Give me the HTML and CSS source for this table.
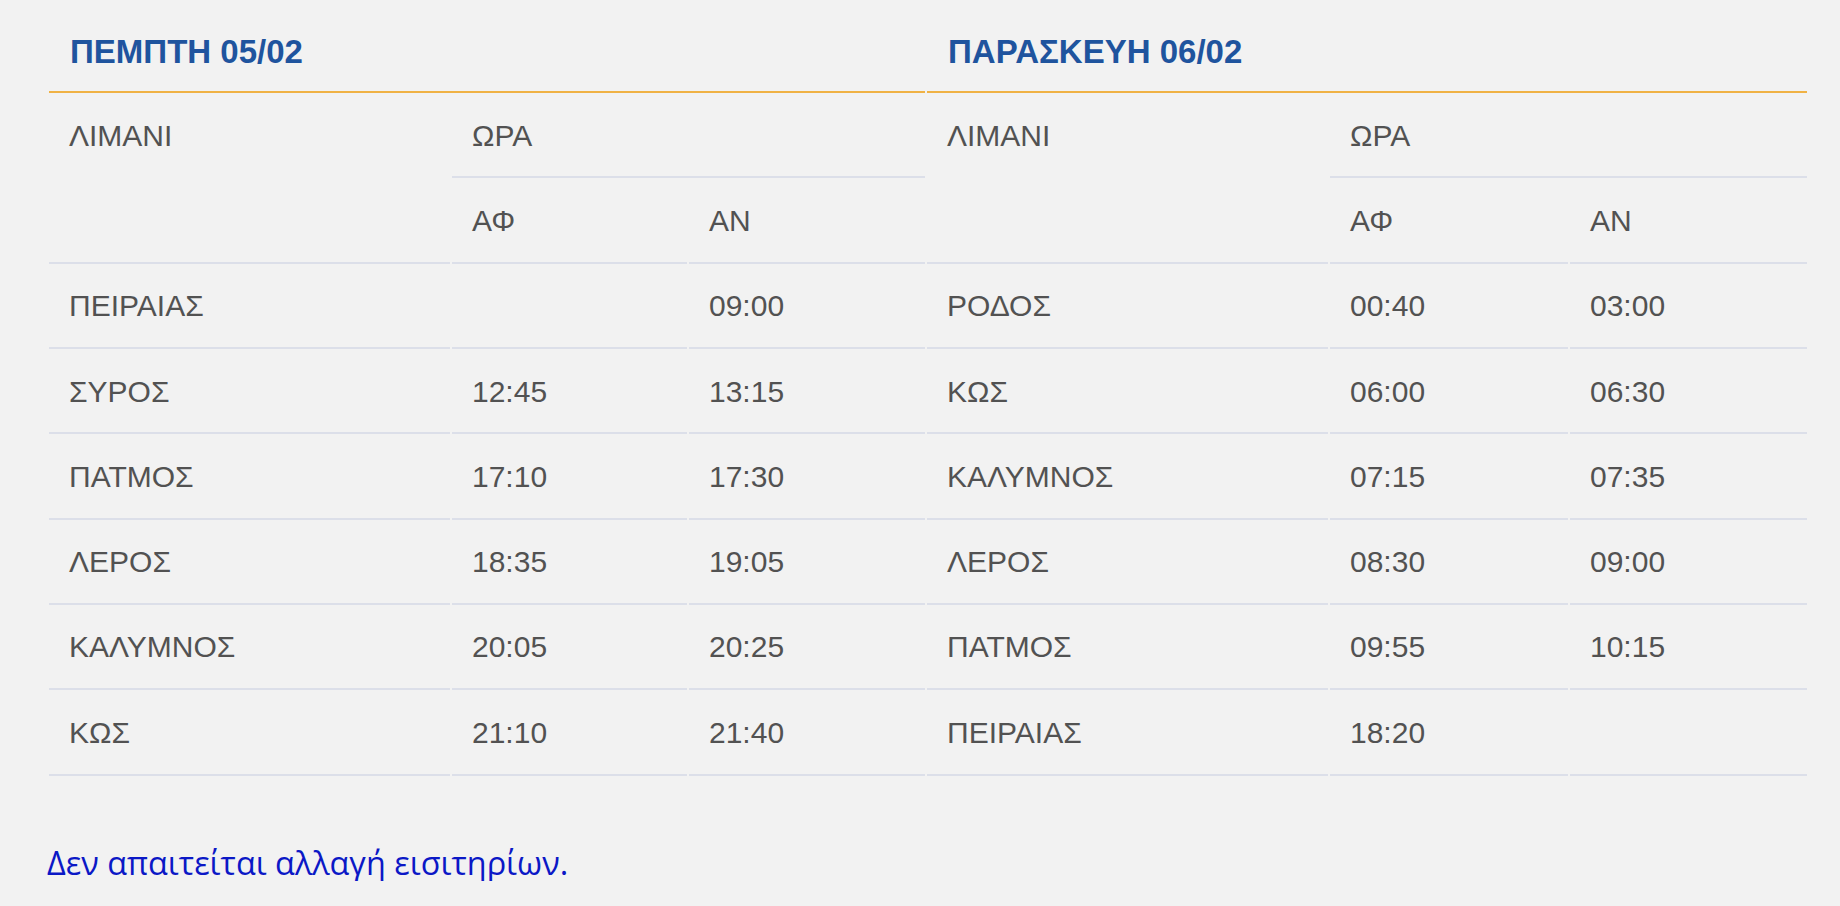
FILE: index.html
```html
<!DOCTYPE html>
<html lang="el">
<head>
<meta charset="utf-8">
<title>Δρομολόγια</title>
<link rel="stylesheet" href="styles.css">
</head>
<body>
<div class="page">
  <table class="schedule">
    <colgroup>
      <col class="c-port-a"><col class="c-dep-a"><col class="c-arr-a">
      <col class="c-port-b"><col class="c-dep-b"><col class="c-arr-b">
    </colgroup>
    <thead>
      <tr>
        <th colspan="3" class="day">ΠΕΜΠΤΗ 05/02</th>
        <th colspan="3" class="day">ΠΑΡΑΣΚΕΥΗ 06/02</th>
      </tr>
      <tr>
        <th rowspan="2" class="port-head">ΛΙΜΑΝΙ</th>
        <th colspan="2">ΩΡΑ</th>
        <th rowspan="2" class="port-head">ΛΙΜΑΝΙ</th>
        <th colspan="2">ΩΡΑ</th>
      </tr>
      <tr>
        <th>ΑΦ</th><th>ΑΝ</th>
        <th>ΑΦ</th><th>ΑΝ</th>
      </tr>
    </thead>
    <tbody>
      <tr><td>ΠΕΙΡΑΙΑΣ</td><td></td><td>09:00</td><td>ΡΟΔΟΣ</td><td>00:40</td><td>03:00</td></tr>
      <tr><td>ΣΥΡΟΣ</td><td>12:45</td><td>13:15</td><td>ΚΩΣ</td><td>06:00</td><td>06:30</td></tr>
      <tr><td>ΠΑΤΜΟΣ</td><td>17:10</td><td>17:30</td><td>ΚΑΛΥΜΝΟΣ</td><td>07:15</td><td>07:35</td></tr>
      <tr><td>ΛΕΡΟΣ</td><td>18:35</td><td>19:05</td><td>ΛΕΡΟΣ</td><td>08:30</td><td>09:00</td></tr>
      <tr><td>ΚΑΛΥΜΝΟΣ</td><td>20:05</td><td>20:25</td><td>ΠΑΤΜΟΣ</td><td>09:55</td><td>10:15</td></tr>
      <tr><td>ΚΩΣ</td><td>21:10</td><td>21:40</td><td>ΠΕΙΡΑΙΑΣ</td><td>18:20</td><td></td></tr>
    </tbody>
  </table>
  <p class="note">Δεν απαιτείται αλλαγή εισιτηρίων.</p>
</div>
</body>
</html>
```
FILE: styles.css
```css
html, body {
  margin: 0;
  padding: 0;
  background: #f2f2f2;
}

.page {
  padding: 0 0 0 47px;
}

.schedule {
  table-layout: fixed;
  width: 1762px;
  border-collapse: separate;
  border-spacing: 2px;
  font-family: "Liberation Sans", Arial, sans-serif;
  color: #525252;
}

.c-port-a { width: 401px; }
.c-dep-a { width: 235px; }
.c-arr-a { width: 236px; }
.c-port-b { width: 401px; }
.c-dep-b { width: 238px; }
.c-arr-b { width: 237px; }

.schedule th,
.schedule td {
  text-align: left;
  font-weight: 400;
  font-size: 30px;
  line-height: 36px;
  padding: 22.6px 20px 22.73px 20px;
  border-bottom: 2px solid #dcdfe9;
  vertical-align: middle;
  white-space: nowrap;
}

.schedule th.day {
  font-size: 33px;
  font-weight: 700;
  line-height: 40px;
  color: #1f549e;
  padding: 29.5px 20px 19.5px 21px;
  border-bottom: 2px solid #f0b245;
}

.schedule th.port-head {
  vertical-align: top;
}

.note {
  margin: 66px 0 0 0;
  font-family: "Open Sans", "Noto Sans", sans-serif;
  font-size: 32.4px;
  line-height: 37px;
  color: #0b18c6;
}
```
